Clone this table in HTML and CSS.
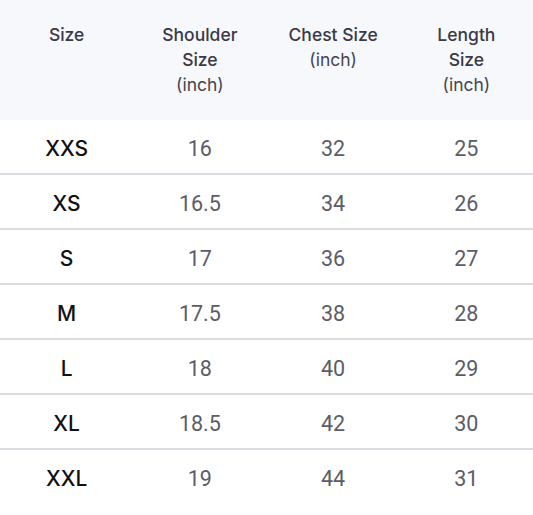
FILE: index.html
```html
<!DOCTYPE html>
<html>
<head>
<meta charset="utf-8">
<link rel="stylesheet" href="styles.css">
</head>
<body>
<table class="chart">
  <thead>
    <tr>
      <th>Size</th>
      <th>Shoulder<br>Size<br><span class="unit">(inch)</span></th>
      <th>Chest Size<br><span class="unit">(inch)</span></th>
      <th>Length<br>Size<br><span class="unit">(inch)</span></th>
    </tr>
  </thead>
  <tbody>
    <tr><td class="sz">XXS</td><td>16</td><td>32</td><td>25</td></tr>
    <tr><td class="sz">XS</td><td>16.5</td><td>34</td><td>26</td></tr>
    <tr><td class="sz">S</td><td>17</td><td>36</td><td>27</td></tr>
    <tr><td class="sz">M</td><td>17.5</td><td>38</td><td>28</td></tr>
    <tr><td class="sz">L</td><td>18</td><td>40</td><td>29</td></tr>
    <tr><td class="sz">XL</td><td>18.5</td><td>42</td><td>30</td></tr>
    <tr class="last"><td class="sz">XXL</td><td>19</td><td>44</td><td>31</td></tr>
  </tbody>
</table>
</body>
</html>
```
FILE: styles.css
```css
html, body {
  margin: 0;
  padding: 0;
  background: #ffffff;
}
.chart {
  width: 533px;
  border-collapse: collapse;
  table-layout: fixed;
}
.chart th {
  background: #f7f8fc;
  height: 120px;
  padding: 22px 0 0 0;
  box-sizing: border-box;
  vertical-align: top;
  font-family: "Inter", "Liberation Sans", sans-serif;
  font-weight: 500;
  font-size: 17.5px;
  line-height: 25px;
  color: #3a3a46;
  text-align: center;
}
.chart th .unit {
  font-weight: 400;
  color: #45454f;
}
.chart td {
  height: 50px;
  padding: 3px 0 0 0;
  text-align: center;
  vertical-align: middle;
  font-family: "Roboto", "Liberation Sans", sans-serif;
  font-size: 21.5px;
  color: #5c5c68;
  border-bottom: 2px solid #dcdce2;
}
.chart tr.last td {
  border-bottom: none;
}
.chart td.sz {
  font-family: "Inter", "Liberation Sans", sans-serif;
  font-weight: 500;
  color: #111114;
  font-size: 21px;
}
```
